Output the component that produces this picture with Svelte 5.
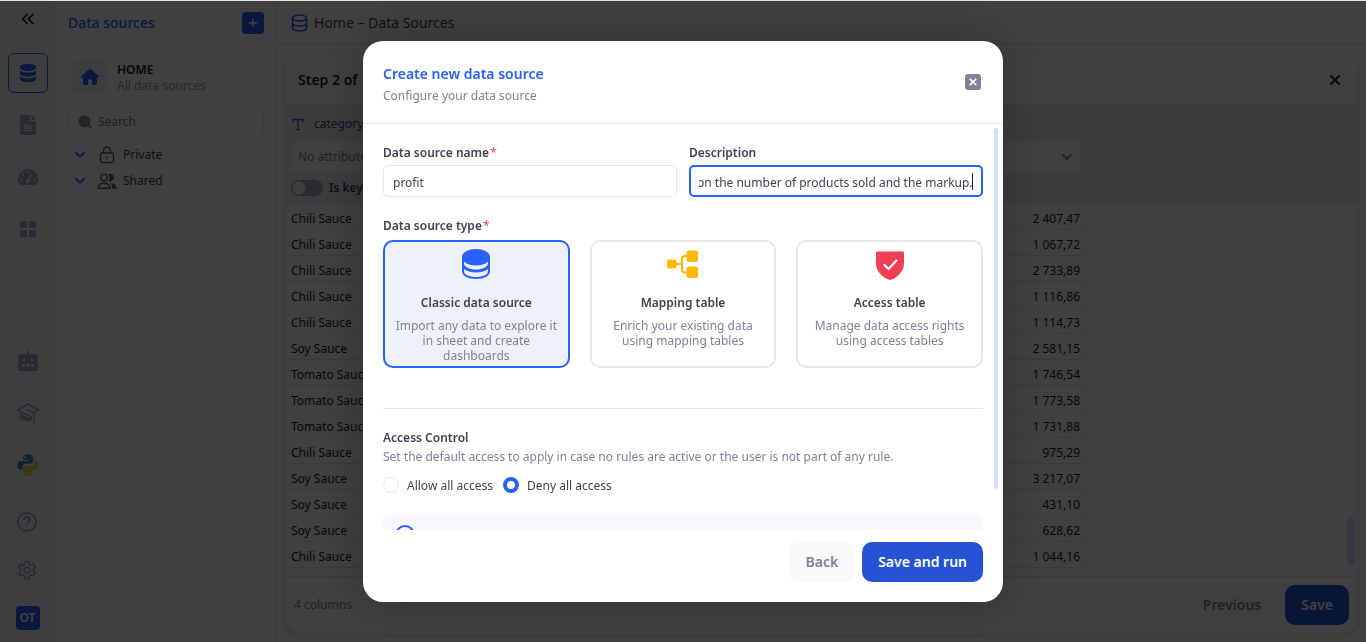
<script>
  import { onMount } from 'svelte';

  let search = '';
  let name = 'profit';
  let description = 'Profit depending on the number of products sold and the markup.';
  let sourceType = 'classic';
  let access = 'deny';
  let isKey = false;
  let descriptionInput;

  const rows = [
    ['Chili Sauce', '2 407,47'],
    ['Chili Sauce', '1 067,72'],
    ['Chili Sauce', '2 733,89'],
    ['Chili Sauce', '1 116,86'],
    ['Chili Sauce', '1 114,73'],
    ['Soy Sauce', '2 581,15'],
    ['Tomato Sauce', '1 746,54'],
    ['Tomato Sauce', '1 773,58'],
    ['Tomato Sauce', '1 731,88'],
    ['Chili Sauce', '975,29'],
    ['Soy Sauce', '3 217,07'],
    ['Soy Sauce', '431,10'],
    ['Soy Sauce', '628,62'],
    ['Chili Sauce', '1 044,16']
  ];

  const types = [
    { id: 'classic', title: 'Classic data source', text: 'Import any data to explore it in sheet and create dashboards' },
    { id: 'mapping', title: 'Mapping table', text: 'Enrich your existing data using mapping tables' },
    { id: 'access', title: 'Access table', text: 'Manage data access rights using access tables' }
  ];

  onMount(() => {
    descriptionInput.focus({ preventScroll: true });
    descriptionInput.setSelectionRange(description.length, description.length);
    descriptionInput.scrollLeft = descriptionInput.scrollWidth;
  });
</script>

<div class="shell">
  <nav class="rail" aria-label="Main">
    <button class="collapse" aria-label="Collapse menu">
      <svg width="14" height="14" viewBox="0 0 14 14" fill="none" stroke="#181c32" stroke-width="1.8"><path d="M6.5 2 1.8 7l4.7 5M12.2 2 7.5 7l4.7 5" /></svg>
    </button>
    <hr />
    <a class="rail-item active" href="#sources" aria-label="Data sources">
      <svg width="18" height="20" viewBox="0 0 18 20" fill="#2861fb"><path d="M1 4c0-1.900 3.600-3 8-3s8 1.100 8 3v1c0 1.900-3.600 3-8 3S1 6.900 1 5z" /><path d="M1 7.600c1.500 1.400 4.500 2 8 2s6.500-.6 8-2v3c0 1.900-3.600 3-8 3s-8-1.100-8-3z" /><path d="M1 13.200c1.500 1.400 4.500 2 8 2s6.500-.6 8-2V16c0 1.900-3.600 3-8 3s-8-1.100-8-3z" /></svg>
    </a>
    <a class="rail-item" href="#sheets" aria-label="Sheets">
      <svg width="16" height="20" viewBox="0 0 16 20"><path fill="#a6a8bb" d="M2 0h8v6h6v12.500c0 .8-.7 1.500-1.500 1.500h-13C.7 20 0 19.300 0 18.500V2c0-1.100.9-2 2-2zm9.500 0L16 4.700h-4.500z" /><path stroke="#f4f7fd" stroke-width="1.300" d="M4 10.500h8M4 13h8M4 15.500h8" /></svg>
    </a>
    <a class="rail-item" href="#dashboards" aria-label="Dashboards">
      <svg width="20" height="16" viewBox="0 0 20 16"><path fill="#a6a8bb" d="M10 0a10 10 0 0 0-10 10c0 1.800.4 3.500 1.200 4.900.4.700 1 1.100 1.800 1.100h14c.8 0 1.400-.4 1.800-1.100A10 10 0 0 0 10 0z" /><path stroke="#f4f7fd" stroke-width="1.500" stroke-linecap="round" d="M9.700 12.500 13.500 5" /><g fill="#f4f7fd"><circle cx="3.500" cy="10.500" r="1.100" /><circle cx="5.200" cy="5.700" r="1.100" /><circle cx="9.700" cy="3.200" r="1.100" /><circle cx="16.500" cy="10.500" r="1.100" /><circle cx="9.800" cy="12.300" r="1.900" /></g></svg>
    </a>
    <a class="rail-item" href="#apps" aria-label="Apps">
      <svg width="18" height="18" viewBox="0 0 18 18" fill="#a6a8bb"><rect x="1" y="1" width="7" height="7" rx="1" /><rect x="10" y="1" width="7" height="7" rx="1" /><rect x="1" y="10" width="7" height="7" rx="1" /><rect x="10" y="10" width="7" height="7" rx="1" /></svg>
    </a>
    <div class="rail-bottom">
      <a class="rail-item" href="#bots" aria-label="Assistants">
        <svg width="20" height="20" viewBox="0 0 20 20"><path fill="#a6a8bb" d="M9 0h2v3h6a3 3 0 0 1 3 3v11a3 3 0 0 1-3 3H3a3 3 0 0 1-3-3V6a3 3 0 0 1 3-3h6z" /><g fill="#f4f7fd"><circle cx="6" cy="9" r="1.200" /><circle cx="14" cy="9" r="1.200" /><path d="M4 13h3v3H5.500A1.500 1.500 0 0 1 4 14.500zM8.500 13h3v3h-3zM13 13h3v1.500a1.500 1.500 0 0 1-1.500 1.500H13z" /></g></svg>
      </a>
      <a class="rail-item" href="#academy" aria-label="Academy">
        <svg width="24" height="20" viewBox="0 0 24 20"><path fill="none" stroke="#a6a8bb" stroke-width="1.500" stroke-linejoin="round" d="M17.500 9.800 22.500 7 12 1 1.500 7 12 12.500l2-1.100" /><path fill="#a6a8bb" d="M3.500 10 12 14.500l4-2.200v4.500c-1.200.8-2.500 1.200-4 1.200-3.500 0-7-1.200-8.500-3.500zM17 9.500l1.500-.8V21H17z" /><path fill="none" stroke="#a6a8bb" stroke-width="1.500" d="m11.500 6.500 6 3.300" /></svg>
      </a>
      <a class="rail-item" href="#python" aria-label="Python">
        <svg width="22" height="22" viewBox="0 0 22 22"><path fill="#4287bb" d="M10.900.5C6.500.5 6 2 6 3.600v2.500h5.200v.8H3.500C1.600 6.900.5 8.500.5 11.200c0 2.600 1.100 4.300 2.900 4.300h2v-2.700c0-1.700 1.400-3.100 3.100-3.100h4.900c1.400 0 2.600-1.200 2.600-2.600V3.600c0-1.800-1.900-3.100-5.100-3.100z" /><circle cx="8.200" cy="3.300" r="1" fill="#f4f7fd" /><path fill="#ffd33b" d="M11.100 21.500c4.400 0 4.900-1.500 4.900-3.100v-2.500h-5.200v-.8h7.700c1.900 0 3-1.600 3-4.300 0-2.600-1.100-4.300-2.900-4.300h-1.500v2.700c0 1.700-1.400 3.100-3.100 3.100H8.600c-1.400 0-2.600 1.200-2.600 2.600v3.500c0 1.800 1.900 3.100 5.100 3.100z" /><circle cx="13.700" cy="18.600" r="1" fill="#f4f7fd" /></svg>
      </a>
      <hr />
      <a class="rail-item" href="#help" aria-label="Help">
        <svg width="22" height="22" viewBox="0 0 22 22" fill="none" stroke="#a6a8bb" stroke-width="1.700"><circle cx="10" cy="11" r="9.200" /><path d="M7.200 8.800c0-1.700 1.200-2.700 2.800-2.700s2.800 1 2.800 2.500c0 2-2.800 2-2.800 4.200M10 14.300v2" stroke-width="1.900" /></svg>
      </a>
      <a class="rail-item" href="#settings" aria-label="Settings">
        <svg width="20" height="20" viewBox="1 0 20 20" fill="none" stroke="#a6a8bb" stroke-width="1.600" stroke-linejoin="round"><path d="M8.300 1.500h3.400l.6 2.500 1.800 1 2.400-.8 1.700 3-1.800 1.800v2l1.800 1.800-1.700 3-2.400-.8-1.800 1-.6 2.500H8.300L7.700 16l-1.800-1-2.400.8-1.700-3L3.600 11V9L1.800 7.200l1.700-3 2.400.8 1.800-1z" /><circle cx="10" cy="10" r="2.900" /></svg>
      </a>
      <a class="rail-item" href="#profile"><span class="avatar">OT</span></a>
    </div>
  </nav>

  <aside class="panel">
    <div class="panel-head">
      <h2>Data sources</h2>
      <button class="add" aria-label="Add data source">
        <svg width="10" height="10" viewBox="0 0 10 10" stroke="#fff" stroke-width="1.600"><path d="M5 1v8M1 5h8" /></svg>
      </button>
    </div>
    <a class="home" href="#home">
      <span class="home-icon">
        <svg width="20" height="18" viewBox="0 0 20 18" fill="#2861fb"><path d="M10 .5 1 8.300c-.5.500-.2 1.200.5 1.200H3v6.200c0 .8.500 1.300 1.300 1.300H8v-4.500c0-.6.400-1 1-1h2c.6 0 1 .4 1 1V17h3.700c.8 0 1.300-.5 1.300-1.300V9.500h1.500c.7 0 1-.7.500-1.200z" /></svg>
      </span>
      <span class="home-text"><strong>HOME</strong><small>All data sources</small></span>
    </a>
    <label class="search">
      <svg width="14" height="14" viewBox="0 0 14 14"><circle cx="6.500" cy="6.500" r="6" fill="#8a8ca0" /><path d="m10 10 3.200 3.200" stroke="#8a8ca0" stroke-width="1.800" /></svg>
      <input type="text" aria-label="Search" placeholder="Search" bind:value={search} />
    </label>
    <ul class="tree">
      <li>
        <svg class="chev" width="12" height="8" viewBox="0 0 12 8"><path d="m1.500 1.500 4.500 4 4.500-4" /></svg>
        <svg width="20" height="18" viewBox="0 0 20 18" fill="none" stroke="#5e6278" stroke-width="1.300"><rect x="3.500" y="7" width="13" height="9.500" rx="1.500" /><path d="M6.500 7V4.500a3.500 3.500 0 0 1 7 0V7" /><path d="M10 10.500v2" stroke-width="1.600" /></svg>
        <span>Private</span>
      </li>
      <li>
        <svg class="chev" width="12" height="8" viewBox="0 0 12 8"><path d="m1.500 1.500 4.500 4 4.500-4" /></svg>
        <svg width="20" height="18" viewBox="0 0 20 18"><g fill="none" stroke="#5e6278" stroke-width="1.400"><circle cx="7" cy="5.500" r="3.300" /><path d="M1 16.300c0-3.200 2.500-5 6-5s6 1.800 6 5z" /></g><path fill="#5e6278" d="M11.500 2a3.800 3.800 0 1 1 0 7c1.500-2 1.500-5 0-7zM13.500 11c4 .3 6.300 2.500 6.300 6h-4.600c0-2.800-.5-4.500-1.700-6z" /></svg>
        <span>Shared</span>
      </li>
    </ul>
  </aside>

  <main class="main">
    <header class="crumbs">
      <svg width="17" height="18" viewBox="0 0 17 18" fill="none" stroke="#2861fb" stroke-width="1.600"><ellipse cx="8.500" cy="4" rx="7" ry="3" /><path d="M1.500 4v10c0 1.700 3.100 3 7 3s7-1.300 7-3V4M1.500 9c0 1.700 3.100 3 7 3s7-1.300 7-3" /></svg>
      <span>Home – Data Sources</span>
    </header>

    <section class="card">
      <div class="card-head">
        <h3><span>Step 2 of</span><span>2</span></h3>
        <button class="plain" aria-label="Close step">
          <svg width="12" height="12" viewBox="0 0 12 12" stroke="#181c32" stroke-width="1.800"><path d="m1.500 1.500 9 9m0-9-9 9" /></svg>
        </button>
      </div>
      <div class="grid">
        <table>
          <colgroup><col class="col" /><col class="col" /><col class="col" /><col class="col" /><col /></colgroup>
          <thead>
            <tr>
              <th>
                <div class="col-name">
                  <svg width="12" height="13" viewBox="0 0 12 13" fill="none" stroke="#2861fb" stroke-width="1.300"><path d="M1 4V1.500h10V4M6 1.500v10M3.800 11.700h4.400" /></svg>
                  <span>category</span>
                </div>
                <select aria-label="Attribute of category"><option>No attribute</option></select>
                <label class="key"><input type="checkbox" role="switch" bind:checked={isKey} /><span>Is key</span></label>
              </th>
              <th></th>
              <th></th>
              <th><div class="col-name"></div><select aria-label="Attribute of value"><option></option></select></th>
              <th class="rest"></th>
            </tr>
          </thead>
          <tbody>
            {#each rows as [category, value]}
              <tr><td>{category}</td><td></td><td></td><td class="num">{value}</td><td class="rest"></td></tr>
            {/each}
          </tbody>
        </table>
        <div class="grid-thumb"></div>
      </div>
      <footer class="card-foot">
        <span>4 columns</span>
        <button class="btn light">Previous</button>
        <button class="btn primary">Save</button>
      </footer>
    </section>
  </main>
</div>

<div class="overlay">
  <div class="modal" role="dialog" aria-modal="true" aria-labelledby="modal-title">
    <header class="modal-head">
      <div>
        <h1 id="modal-title">Create new data source</h1>
        <p>Configure your data source</p>
      </div>
      <button class="close" aria-label="Close">
        <svg width="8" height="8" viewBox="0 0 8 8" stroke="#fff" stroke-width="1.800"><path d="m.8.8 6.400 6.400m0-6.400L.8 7.200" /></svg>
      </button>
    </header>

    <div class="modal-wrap">
      <div class="modal-body">
        <div class="fields">
          <div class="field">
            <label for="ds-name">Data source name<b>*</b></label>
            <input id="ds-name" type="text" bind:value={name} />
          </div>
          <div class="field">
            <label for="ds-desc">Description</label>
            <input id="ds-desc" type="text" bind:value={description} bind:this={descriptionInput} />
            <i class="caret"></i>
          </div>
        </div>

        <fieldset class="types">
          <legend>Data source type<b>*</b></legend>
          <div class="type-list">
            {#each types as type}
              <label class="type" class:selected={sourceType === type.id}>
                <input type="radio" name="type" value={type.id} bind:group={sourceType} />
                {#if type.id === 'classic'}
                  <svg width="32" height="32" viewBox="0 0 32 32"><path fill="#2861fb" d="M16 1C8.300 1 2 4.400 2 9v14.500C2 28 8.300 31 16 31s14-3 14-7.500V9c0-4.600-6.300-8-14-8z" /><path fill="#eef1fb" d="M4 13.500c2.500 2.500 7 4 12 4s9.500-1.500 12-4v2c0 3.300-5.400 6-12 6s-12-2.700-12-6zM4 21c2.500 2.300 7 3.400 12 3.400s9.500-1.100 12-3.400v2.500c0 3-5.400 5.500-12 5.500S4 26.500 4 23.500z" /></svg>
                {:else if type.id === 'mapping'}
                  <svg width="32" height="32" viewBox="0 0 32 32"><g fill="#ffb800"><rect x="0" y="11.500" width="9.500" height="9" rx="2" /><rect x="19.500" y="2.500" width="11.500" height="11.500" rx="2.500" /><rect x="19.500" y="18.500" width="11.500" height="11.500" rx="2.500" /></g><path fill="none" stroke="#ffb800" stroke-width="2" d="M9 16h6M20 8h-2c-2 0-3 1-3 3v10.500c0 2 1 3 3 3h2" /></svg>
                {:else}
                  <svg width="32" height="32" viewBox="0 0 32 32"><path fill="#f03e55" d="M3.500 3.500h25c1 0 1.500.6 1.500 1.500v10.500C30 23.500 23 30 16 32 9 30 2 23.500 2 15.500V5c0-.9.500-1.500 1.500-1.500z" /><path fill="none" stroke="#fff" stroke-width="2.200" stroke-linecap="round" d="m10.500 17 4 4 8-8.500" /></svg>
                {/if}
                <strong>{type.title}</strong>
                <span>{type.text}</span>
              </label>
            {/each}
          </div>
        </fieldset>

        <section class="access">
          <h4>Access Control</h4>
          <p>Set the default access to apply in case no rules are active or the user is not part of any rule.</p>
          <div class="radios">
            <label><input type="radio" name="access" value="allow" bind:group={access} /><span>Allow all access</span></label>
            <label><input type="radio" name="access" value="deny" bind:group={access} /><span>Deny all access</span></label>
          </div>
          <div class="notice">
            <svg width="20" height="20" viewBox="0 0 20 20" fill="none" stroke="#2861fb" stroke-width="2"><circle cx="10" cy="10" r="9" /><path d="M10 9v5M10 5.500v2" /></svg>
          </div>
        </section>
      </div>
      <div class="modal-thumb"></div>
    </div>

    <footer class="modal-foot">
      <button class="btn light">Back</button>
      <button class="btn primary">Save and run</button>
    </footer>
  </div>
</div>

<style>
  :global(body) { margin:0; background:#fff; overflow:hidden; }
  .shell, .overlay { font-family:"Noto Sans", "Open Sans", sans-serif; font-size:12px; line-height:16px; color:#3f4254; }
  .shell *, .overlay * { box-sizing:border-box; }
  .shell { display:flex; height:100vh; box-sizing:border-box; border-top:1px solid #dfe7e1; }
  button, input, select { font:inherit; color:inherit; margin:0; }
  button { border:0; padding:0; background:none; display:flex; align-items:center; justify-content:center; }
  h1, h2, h3, h4, p, ul { margin:0; padding:0; }
  a { color:inherit; text-decoration:none; }
  svg { display:block; flex:none; }

  .rail { width:56px; flex:none; display:flex; flex-direction:column; align-items:center; gap:12px; background:#f4f7fd; border-right:1px solid #e9e9f0; }
  .rail hr { width:40px; height:1px; margin:0; border:0; background:#dcdde6; }
  .collapse { width:40px; height:31px; padding-top:5px; }
  .collapse + hr { margin-bottom:-4px; }
  .rail-item { width:40px; height:40px; display:flex; align-items:center; justify-content:center; border-radius:6px; }
  .rail-item.active { border:1px solid #2861fb; }
  .rail-bottom { margin-top:auto; padding-bottom:4px; display:flex; flex-direction:column; align-items:center; gap:12px; }
  .rail-bottom hr { margin:-4px 0; }
  .rail-bottom hr ~ .rail-item { margin-top:-4px; }
  .rail-bottom hr + .rail-item { margin-top:0; }
  .avatar { width:24px; height:24px; border-radius:4px; background:#2861fb; color:#fff; font-size:12px; font-weight:600; line-height:24px; text-align:center; }

  .panel { width:221px; flex:none; padding:0 12px 0 12px; border-right:1px solid #e9e9f0; }
  .panel-head { height:44px; display:flex; align-items:center; justify-content:space-between; }
  .panel h2 { font-size:14px; font-weight:500; line-height:20px; color:#2861fb; }
  .add { width:22px; height:22px; border-radius:4px; background:#2861fb; }
  .home { display:flex; align-items:center; gap:10px; margin:14px 4px 12px; }
  .home-icon { width:35px; height:34px; display:flex; align-items:center; justify-content:center; border-radius:6px; background:#f3f4f9; }
  .home-text { display:flex; flex-direction:column; padding-top:3px; }
  .home-text strong { font-size:12px; font-weight:600; color:#181c32; }
  .home-text small { font-size:12px; color:#9a9cb0; }
  .search { height:32px; display:flex; align-items:center; gap:6px; padding:0 9px; border:1px solid #e9e9f0; border-radius:6px; }
  .search input { width:100%; border:0; padding:0; background:none; outline:none; }
  .search input::placeholder { color:#7e8299; }
  .tree { list-style:none; padding:4px 6px; }
  .tree li { height:26px; display:flex; align-items:center; }
  .chev { fill:none; stroke:#2861fb; stroke-width:1.800; margin-right:11px; }
  .tree span { margin-left:6px; }

  .main { flex:1; min-width:0; display:flex; flex-direction:column; }
  .crumbs { height:44px; flex:none; display:flex; align-items:center; gap:6px; padding:0 14px; font-size:14px; border-bottom:1px solid #e3e3ea; }
  .card { flex:1; min-height:0; margin:8px; display:flex; flex-direction:column; border:1px solid #ececf2; border-radius:16px; box-shadow:0 2px 6px rgba(0,0,0,.12); overflow:hidden; }
  .card-head { height:51px; flex:none; display:flex; align-items:center; justify-content:space-between; padding:0 16px 0 12px; }
  .card-head h3 { display:flex; gap:8px; font-size:14px; font-weight:600; color:#181c32; }
  .grid { flex:1; min-height:0; position:relative; overflow:hidden; border-top:1px solid #e3e3ea; }
  table { width:100%; table-layout:fixed; border-collapse:separate; border-spacing:0; }
  .col { width:200px; }
  th { height:98px; padding:2px 5px 0; vertical-align:top; text-align:left; font-weight:400; background:#eeeef5; border-bottom:1px solid #e3e3ea; border-right:1px solid #e6e6ee; }
  th.rest { border:0; }
  td { height:26px; padding:4px 5px 0; color:#181c32; border-bottom:1px solid #e6e6ec; border-right:1px solid #e6e6ec; white-space:nowrap; }
  td.rest { border:0; }
  .num { text-align:right; }
  .col-name { height:32px; display:flex; align-items:center; gap:10px; padding:0 1px; }
  th select { width:100%; height:30px; margin-top:2px; padding:0 7px; border:0; border-radius:5px; color:#7e8299; appearance:none; background:#fff url("data:image/svg+xml,%3Csvg xmlns='http://www.w3.org/2000/svg' width='12' height='8' fill='none' stroke='%237e8299' stroke-width='2'%3E%3Cpath d='m1.500 1.500 4.500 4.500 4.500-4.500'/%3E%3C/svg%3E") no-repeat right 7px center; }
  .key { display:flex; align-items:center; gap:6px; margin-top:8px; font-weight:600; }
  .key input { appearance:none; width:32px; height:16px; border-radius:8px; background:radial-gradient(circle at 8px 8px, #f1f1f6 6px, #a6a8bb 7px); }
  .grid-thumb { position:absolute; right:2px; bottom:10px; width:8px; height:48px; border-radius:4px; background:#d3ddff; }
  .card-foot { height:57px; flex:none; display:flex; align-items:center; gap:8px; padding:0 8px; border-top:1px solid #e3e3ea; }
  .card-foot span { margin-right:auto; color:#7e8299; }

  .btn { height:40px; padding:0 16px; border-radius:10px; font-size:14px; font-weight:600; line-height:20px; }
  .btn.light { background:#f9f9f9; color:#7e8299; }
  .btn.primary { background:#2653d4; color:#fff; }

  .overlay { position:fixed; inset:1px 0 0; display:flex; align-items:center; justify-content:center; background:rgba(0,0,0,.75); }
  .modal { width:640px; max-width:100%; max-height:calc(100% - 80px); display:flex; flex-direction:column; border-radius:20px; background:#fff; box-shadow:0 0 50px rgba(0,0,0,.25); }
  .modal-head { height:83px; flex:none; display:flex; align-items:center; justify-content:space-between; padding:0 22px 0 20px; border-bottom:1px solid #e6e6ec; }
  .modal-head div { padding-top:8px; }
  .modal-head h1 { font-size:14px; font-weight:600; line-height:20px; color:#2861fb; }
  .modal-head p { line-height:24px; color:#7e8299; }
  .close { width:16px; height:16px; border-radius:3px; background:#7e8299; }
  .modal-wrap { position:relative; min-height:0; display:flex; }
  .modal-body { flex:1; min-width:0; padding:21px 20px 0; overflow-y:auto; scrollbar-width:none; }
  .modal-thumb { position:absolute; top:4px; right:5px; width:4px; height:89%; border-radius:2px; background:#d3ddff; }
  .fields { display:grid; grid-template-columns:1fr 1fr; gap:12px; }
  .field { position:relative; display:flex; flex-direction:column; gap:4px; }
  .field label, legend { font-weight:600; padding:0; }
  b { margin-left:1px; color:#d9455a; font-weight:400; }
  .field input { width:100%; height:32px; padding:2px 9px 0; border:1px solid #e6e6ec; border-radius:5px; outline:none; }
  .field input:focus { border:2px solid #2861fb; padding:2px 8px 0; }
  .caret { position:absolute; right:10px; bottom:7px; width:1px; height:17px; background:#181c32; }
  .types { min-width:0; margin:21px 0 0; padding:0; border:0; }
  .type-list { display:grid; grid-template-columns:repeat(3, 1fr); gap:20px; margin-top:6px; }
  .type { position:relative; min-height:128px; display:flex; flex-direction:column; align-items:center; padding:6px 8px 0; border:2px solid #e6e6ec; border-radius:10px; text-align:center; }
  .type.selected { border-color:#2861fb; background:#eef1fb; }
  .type input { position:absolute; opacity:0; }
  .type strong { margin:15px 0 7px; font-weight:600; }
  .type span { line-height:15px; color:#7e8299; }
  .access { margin-top:40px; padding-top:20px; border-top:1px solid #e6e6ec; }
  .access h4 { font-size:12px; font-weight:600; line-height:18px; }
  .access p { line-height:20px; color:#7e8299; }
  .radios { display:flex; gap:10px; margin-top:10px; }
  .radios label { height:16px; display:flex; align-items:center; gap:8px; }
  .radios span { padding-top:2px; }
  .radios input { appearance:none; width:16px; height:16px; border:1px solid #e6e6ec; border-radius:50%; }
  .radios input:checked { border:4px solid #2861fb; }
  .notice { margin-top:20px; min-height:72px; padding:12px; border-radius:6px; background:#f8f9ff; }
  .modal-foot { flex:none; display:flex; justify-content:flex-end; gap:8px; padding:12px 20px 20px; }
</style>
